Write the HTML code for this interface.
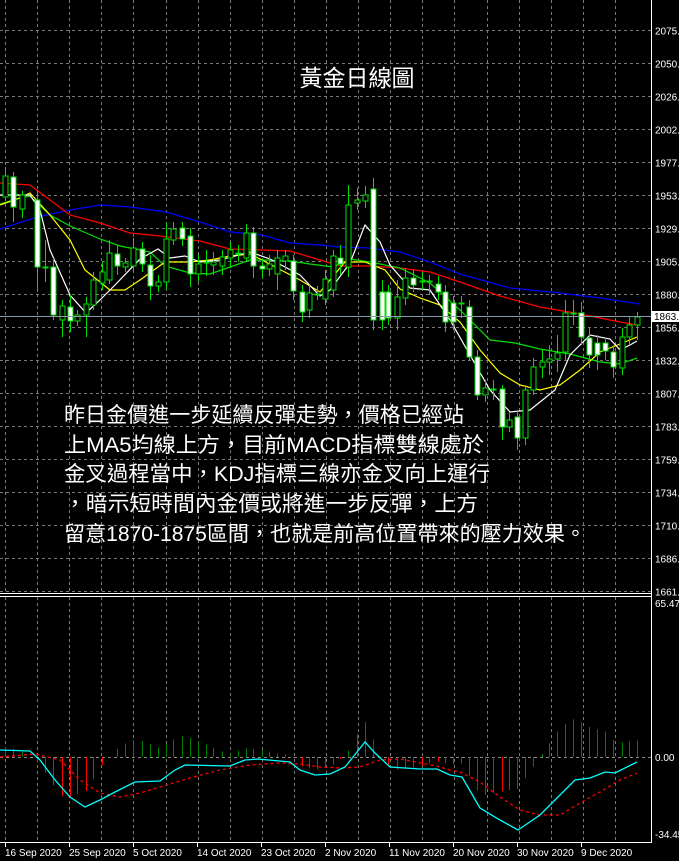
<!DOCTYPE html>
<html><head><meta charset="utf-8"><style>
html,body{margin:0;padding:0;background:#000;width:679px;height:861px;overflow:hidden}
svg{display:block}
.t{font-family:"Liberation Sans","Noto Sans CJK TC",sans-serif;fill:#fff}
</style></head><body>
<svg id="s" width="679" height="861" viewBox="0 0 679 861" xmlns="http://www.w3.org/2000/svg">
<rect width="679" height="861" fill="#000"/>
<g id="grid"></g>
<g id="lines"></g>
<g id="cand"></g>
<g id="macd"></g>
<line x1="0" y1="316.5" x2="651" y2="316.5" stroke="#8a9aa8" stroke-width="1"/>
<line x1="651.5" y1="0" x2="651.5" y2="843" stroke="#fff"/>
<line x1="0" y1="593.5" x2="651" y2="593.5" stroke="#fff"/>
<line x1="0" y1="596.5" x2="651" y2="596.5" stroke="#fff"/>
<line x1="0" y1="842.5" x2="651" y2="842.5" stroke="#fff"/>
<g id="axis" class="t" font-size="10"></g>
<rect x="652" y="311" width="27" height="11" fill="#fff"/>
<text x="654" y="320" font-size="10" font-family="Liberation Sans,sans-serif" fill="#000">1863.</text>
<text class="t" x="357" y="86" font-size="23" text-anchor="middle">黃金日線圖</text>
<g class="t" font-size="21">
<text x="64" y="422" textLength="400" lengthAdjust="spacingAndGlyphs">昨日金價進一步延續反彈走勢，價格已經站</text>
<text x="64" y="452" textLength="420" lengthAdjust="spacingAndGlyphs">上MA5均線上方，目前MACD指標雙線處於</text>
<text x="64" y="481" textLength="426" lengthAdjust="spacingAndGlyphs">金叉過程當中，KDJ指標三線亦金叉向上運行</text>
<text x="64" y="511" textLength="414" lengthAdjust="spacingAndGlyphs">，暗示短時間內金價或將進一步反彈，上方</text>
<text x="64" y="541" textLength="522" lengthAdjust="spacingAndGlyphs">留意1870-1875區間，也就是前高位置帶來的壓力效果。</text>
</g>
</svg>
<script>
var NS="http://www.w3.org/2000/svg";
function el(p,n,a){var e=document.createElementNS(NS,n);for(var k in a)e.setAttribute(k,a[k]);document.getElementById(p).appendChild(e);return e;}
for(var k=0;k<20;k++){var x=5+32.1*k;if(x>648)break;x=Math.round(x)+0.5;
el("grid","line",{x1:x,y1:0,x2:x,y2:591,stroke:"#7a7a7a","stroke-dasharray":"3,3"});
el("grid","line",{x1:x,y1:597,x2:x,y2:842,stroke:"#7a7a7a","stroke-dasharray":"3,3"});}
var labs=["2075","2050","2026","2002","1977","1953","1929","1905","1880","1856","1832","1807","1783","1759","1734","1710","1686","1661"];
for(var i=0;i<18;i++){var y=30+33*i+0.5;
el("grid","line",{x1:0,y1:y,x2:651,y2:y,stroke:"#7a7a7a","stroke-dasharray":"3,3"});
var t=el("axis","text",{x:655,y:y+4});t.textContent=labs[i]+".";}
var t2=el("axis","text",{x:655,y:607});t2.textContent="65.47";
var t3=el("axis","text",{x:655,y:761});t3.textContent="0.00";
var t4=el("axis","text",{x:655,y:838});t4.textContent="-34.45";
el("grid","line",{x1:0,y1:757.5,x2:651,y2:757.5,stroke:"#8a8a8a","stroke-dasharray":"3,3"});
var dates=[["16 Sep 2020",5],["25 Sep 2020",69],["5 Oct 2020",133],["14 Oct 2020",197],["23 Oct 2020",261],["2 Nov 2020",325],["11 Nov 2020",389],["20 Nov 2020",453],["30 Nov 2020",517],["9 Dec 2020",581]];
dates.forEach(function(d){el("axis","line",{x1:d[1]+0.5,y1:843,x2:d[1]+0.5,y2:847,stroke:"#fff"});var t=el("axis","text",{x:d[1],y:856});t.textContent=d[0];});
function pl(pts,col,dash){var a={points:pts.map(function(p){return p.join(",")}).join(" "),fill:"none",stroke:col,"stroke-width":1.2};if(dash)a["stroke-dasharray"]=dash;el("lines","polyline",a);}
pl([[0,229],[37,217],[70,210],[100,205],[130,207],[166,212],[200,222],[230,232],[262,235],[290,243],[320,245],[340,247],[370,248],[400,252],[430,262],[460,274],[510,288],[560,293],[600,298],[640,304]],"#0000ff");
pl([[0,183],[30,185],[50,200],[70,215],[100,223],[130,233],[160,236],[200,241],[230,249],[262,250],[290,251],[310,257],[340,266],[370,266],[400,268],[430,272],[460,282],[500,296],[540,307],[580,314],[620,322],[637,325]],"#ff0000");
pl([[0,204],[20,198],[30,196],[50,215],[70,226],[100,239],[120,246],[150,252],[165,266],[190,273],[210,274],[230,267],[250,260],[262,260],[290,261],[310,264],[333,267],[350,259],[370,262],[400,268],[430,283],[460,310],[490,340],[515,343],[540,349],[570,354],[600,362],[620,364],[637,358]],"#00e000");
pl([[0,205],[20,198],[30,193],[50,215],[70,240],[85,270],[110,290],[125,290],[140,280],[165,262],[190,262],[210,260],[230,256],[250,254],[262,260],[300,280],[320,292],[345,262],[365,262],[385,270],[400,289],[420,298],[440,305],[460,322],[480,350],[500,373],[520,385],[540,390],[560,385],[580,370],[600,352],[620,344],[637,337]],"#ffff00");
pl([[0,195],[30,195],[40,210],[50,250],[70,295],[86,313],[100,300],[115,285],[140,259],[158,249],[170,258],[185,256],[200,262],[220,260],[250,252],[270,259],[300,275],[320,296],[330,290],[350,263],[365,225],[380,242],[390,265],[410,288],[430,290],[450,320],[470,355],[490,390],[510,412],[530,410],[555,390],[570,355],[590,335],[610,339],[620,350],[630,345],[637,341]],"#ffffff");
var C=[[5,197,176,167,200],[13,177,207,172,222],[22,209,195,191,218],[37,200,267,190,292],[45,267,268,240,282],[53,267,315,258,320],[62,320,306,300,337],[70,307,321,295,332],[77,321,315,310,326],[86,315,304,297,337],[93,305,280,272,310],[102,283,272,262,290],[109,280,253,240,284],[117,254,266,245,275],[125,267,263,258,272],[133,266,248,238,270],[142,249,264,242,272],[150,265,286,255,300],[158,286,282,275,292],[166,282,239,222,290],[173,240,229,222,245],[182,228,239,222,246],[190,236,274,228,287],[198,274,264,255,282],[206,262,262,250,276],[213,265,262,252,275],[222,266,257,250,275],[230,258,250,242,268],[238,253,253,245,262],[246,258,233,224,262],[253,233,266,227,278],[262,266,269,258,278],[269,269,264,255,276],[277,274,258,250,290],[285,261,256,250,270],[293,261,291,255,300],[302,292,312,285,322],[309,310,293,285,318],[317,294,294,286,300],[325,299,279,270,305],[333,290,256,250,297],[340,258,264,245,275],[348,267,205,185,277],[357,203,200,188,210],[365,201,195,186,208],[373,189,320,178,330],[382,292,320,280,330],[388,292,318,285,325],[397,318,297,280,330],[405,298,278,268,305],[413,278,285,270,292],[422,281,282,272,290],[429,281,282,275,295],[438,284,292,276,300],[445,292,322,285,332],[453,303,322,296,330],[461,303,304,296,318],[469,307,357,300,360],[477,357,395,350,400],[485,395,388,380,402],[493,389,390,380,400],[502,389,427,385,440],[509,427,420,412,432],[517,417,438,410,450],[525,438,390,385,445],[533,390,367,358,395],[542,367,362,350,378],[549,362,359,345,375],[557,359,353,335,372],[565,352,313,300,360],[573,313,314,300,325],[581,313,337,302,345],[589,338,355,328,368],[597,343,355,335,370],[605,343,351,338,360],[613,352,367,345,378],[622,368,337,328,375],[629,337,325,316,345],[637,325,317,312,340]];
C.forEach(function(c){var x=c[0]+0.5;el("cand","line",{x1:x,y1:c[3],x2:x,y2:c[4],stroke:"#00e000"});
var top=Math.min(c[1],c[2]),h=Math.max(Math.abs(c[1]-c[2]),1);var bear=c[2]>c[1];
el("cand","rect",{x:c[0]-2,y:top,width:5,height:h,fill:bear?"#fff":"#000",stroke:"#00e000","stroke-width":1});});
var M=[[0,750],[30,751],[40,760],[55,780],[70,797],[85,807],[100,800],[115,792],[135,782],[160,781],[175,770],[185,765],[230,766],[245,760],[258,759],[290,762],[300,770],[315,775],[330,774],[345,767],[365,742],[375,753],[390,767],[420,769],[437,769],[450,775],[462,777],[480,808],[500,820],[518,830],[540,815],[560,795],[575,780],[590,778],[605,772],[615,773],[637,762]];
var S=[[0,757],[35,754],[60,760],[80,780],[100,793],[120,797],[140,793],[160,787],[190,778],[220,770],[250,765],[280,763],[300,764],[320,767],[340,768],[360,767],[380,760],[400,759],[437,766],[450,770],[460,772],[480,782],[500,797],[520,810],[540,815],[560,815],[580,803],[600,792],[620,780],[637,773]];
function interp(A,x){for(var i=1;i<A.length;i++){if(x<=A[i][0]){var a=A[i-1],b=A[i];return a[1]+(b[1]-a[1])*(x-a[0])/(b[0]-a[0]);}}return A[A.length-1][1];}
C.forEach(function(c){var x=c[0];var d=(interp(S,x)-interp(M,x))*1.5;var y2=757-d;
el("macd","line",{x1:x+0.5,y1:757,x2:x+0.5,y2:y2,stroke:d>0?"#008000":"#ff0000","stroke-width":1});});
function pm(A,col,dash){var a={points:A.map(function(p){return p.join(",")}).join(" "),fill:"none",stroke:col,"stroke-width":1.3};if(dash)a["stroke-dasharray"]=dash;el("macd","polyline",a);}
pm(S,"#ff0000","3,3");pm(M,"#00ffff");
</script>
</body></html>
